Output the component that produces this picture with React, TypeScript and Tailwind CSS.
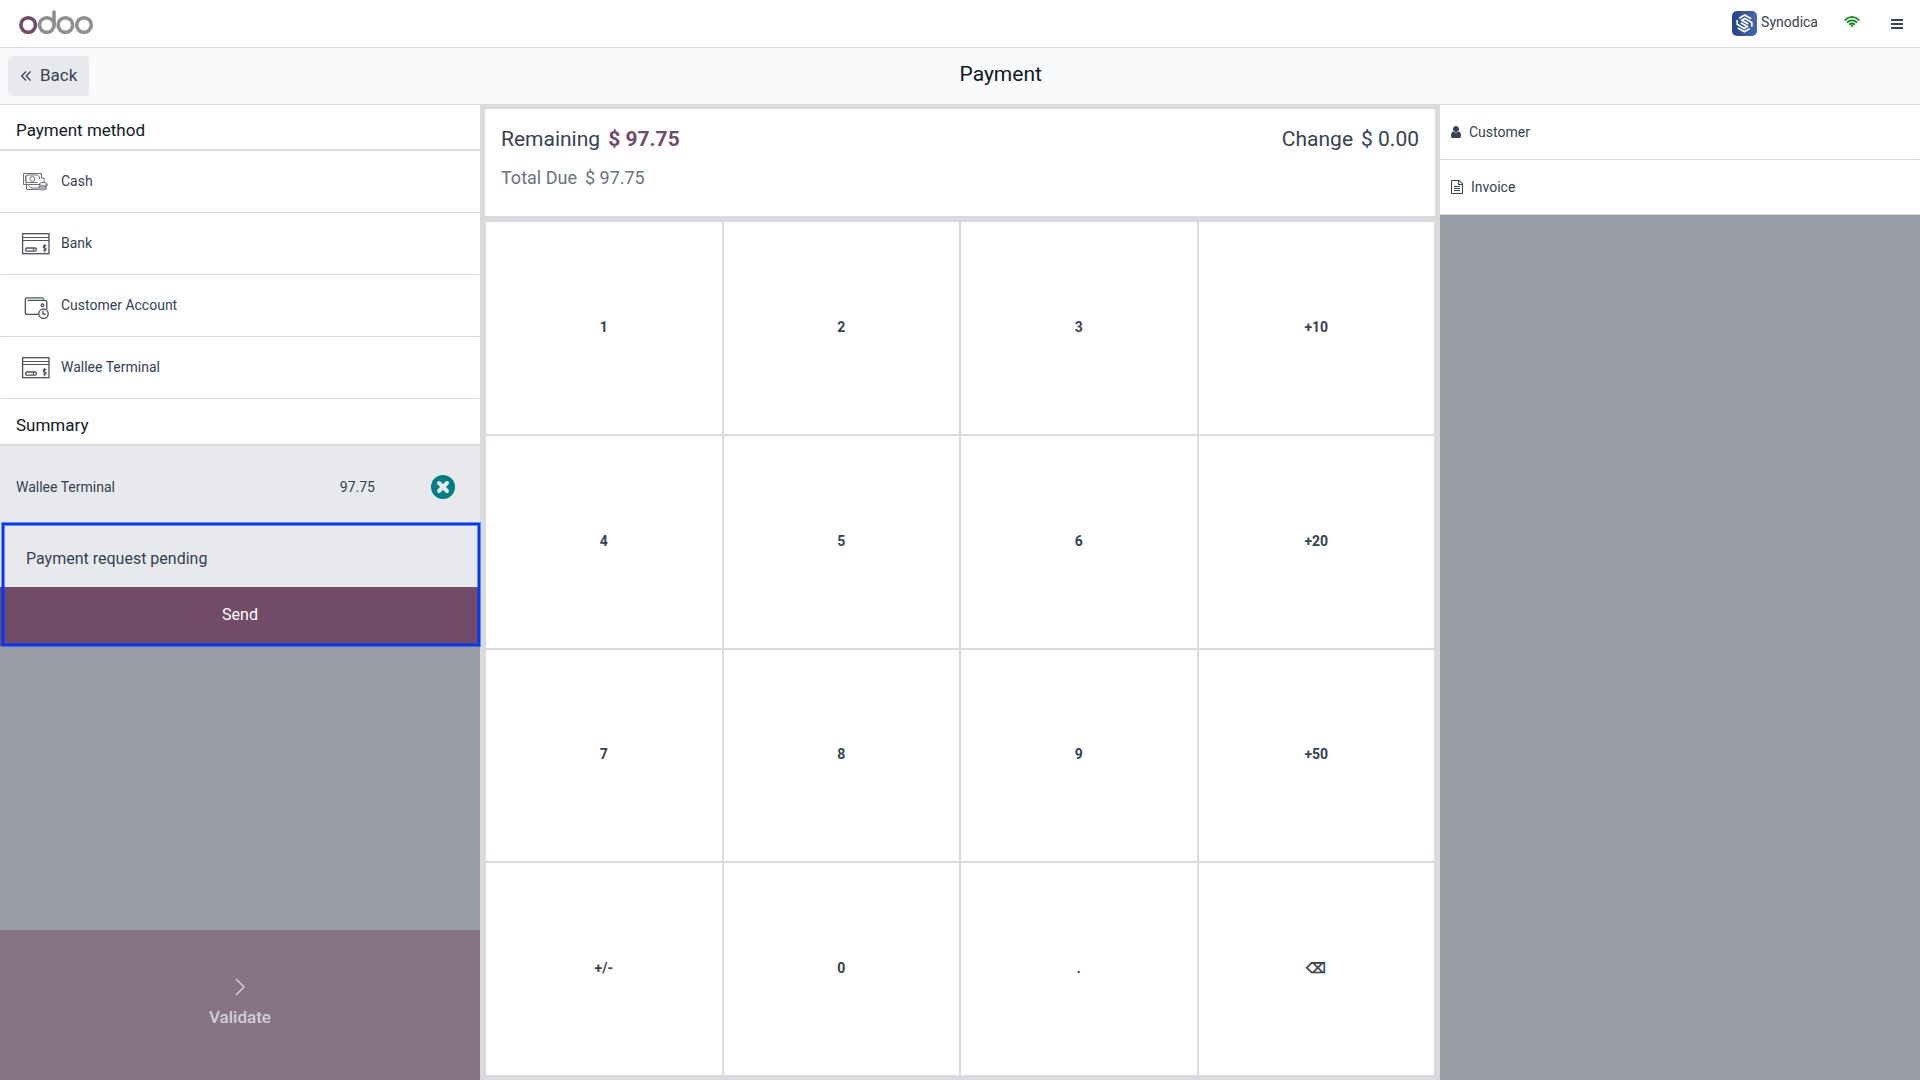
import type { ReactNode } from "react";

const OdooLogo = () => (
  <svg width="76" height="24" viewBox="0 0 76 24" fill="none" strokeWidth="3.6" aria-label="odoo">
    <g stroke="#8f8f8f">
      <circle cx="27.8" cy="15" r="7.3" />
      <circle cx="46.4" cy="15" r="7.3" />
      <circle cx="65" cy="15" r="7.3" />
      <path d="M35 15V2" strokeLinecap="round" />
    </g>
    <circle cx="9.2" cy="15" r="7.3" stroke="#714b67" />
  </svg>
);

const SynodicaLogo = () => (
  <svg width="25" height="25" viewBox="0 0 25 25" fill="none">
    <defs>
      <linearGradient id="synodica" x1="0" y1="0" x2="1" y2="0">
        <stop offset="0" stopColor="#27408b" />
        <stop offset="1" stopColor="#4468ae" />
      </linearGradient>
    </defs>
    <rect width="25" height="25" rx="5" fill="url(#synodica)" />
    <g stroke="#fff" strokeWidth="1.7">
      <path d="M7.2 7.2L12.6 4L19.2 7.8" />
      <path d="M17.8 17.6L12.4 20.8L5.8 17" />
      <path d="M19.8 15.8V11.6L12.8 7.4L9.8 9.2L16.2 13" />
      <path d="M5.2 9V13.2L12.2 17.4L15.2 15.6L8.8 11.8" />
    </g>
  </svg>
);

const WifiIcon = () => (
  <svg width="16" height="12" viewBox="0 0 16 12" fill="none" stroke="#008818" strokeWidth="1.7">
    <path d="M.7 4.3Q8-2.5 15.3 4.3" />
    <path d="M3 6.5Q8 2.1 13 6.5" />
    <path d="M5.2 8.7Q8 6.3 10.8 8.7" />
    <path d="M6.4 9.6Q8 8.3 9.6 9.6L8 11.4z" fill="#008818" stroke="none" />
  </svg>
);

const UserIcon = () => (
  <svg width="10" height="14" viewBox="0 0 1280 1792" fill="currentColor">
    <path d="M1280 1399q0 109-62.5 187t-150.5 78h-854q-88 0-150.5-78t-62.5-187q0-85 8.5-160.5t31.5-152 58.5-131 94-89 134.5-34.5q131 128 313 128t313-128q76 0 134.5 34.5t94 89 58.5 131 31.5 152 8.5 160.5zm-256-887q0 159-112.5 271.5t-271.5 112.5-271.5-112.5-112.5-271.5 112.5-271.5 271.5-112.5 271.5 112.5 112.5 271.5z" />
  </svg>
);

const InvoiceIcon = () => (
  <svg width="12" height="14" viewBox="0 0 1536 1792" fill="currentColor">
    <path d="M1468 380q28 28 48 76t20 88v1152q0 40-28 68t-68 28h-1344q-40 0-68-28t-28-68v-1600q0-40 28-68t68-28h896q40 0 88 20t76 48zm-444-244v376h376q-10-29-22-41l-313-313q-12-12-41-22zm384 1528v-1024h-416q-40 0-68-28t-28-68v-416h-768v1536h1280zm-1024-864q0-14 9-23t23-9h704q14 0 23 9t9 23v64q0 14-9 23t-23 9h-704q-14 0-23-9t-9-23v-64zm736 224q14 0 23 9t9 23v64q0 14-9 23t-23 9h-704q-14 0-23-9t-9-23v-64q0-14 9-23t23-9h704zm0 256q14 0 23 9t9 23v64q0 14-9 23t-23 9h-704q-14 0-23-9t-9-23v-64q0-14 9-23t23-9h704z" />
  </svg>
);

const CashIcon = () => (
  <svg width="30" height="30" viewBox="0 0 30 30" fill="none" stroke="#5b616c" strokeWidth="0.9">
    <path d="M18 17.5H2.5V6.5H20.5V11" />
    <path d="M5 17.5V8.5H6M4.5 13.5V9.5L6.5 8H16.5L18.5 10V12M4.5 13.5L6.5 15.5H16.5" />
    <circle cx="11.3" cy="12" r="2.4" />
    <path d="M5.5 18V22.5H17.5M7.5 18.5L10 21H17M20.5 11H23V15.5" />
    <ellipse cx="22.3" cy="17" rx="3.8" ry="1.5" />
    <path d="M18.5 17V19Q22 21.5 26.1 19V17M18.5 19L17.8 20.5V22Q21.5 24.5 25.3 22V20.5M17.8 20.5Q21.5 22.5 25.3 20.5" />
  </svg>
);

const CardIcon = () => (
  <svg width="30" height="30" viewBox="0 0 30 30" fill="none" stroke="#4b515d">
    <rect x="1.6" y="4.7" width="26.4" height="20" strokeWidth="1.3" />
    <path d="M2 8.5H28M2 11.5H28" strokeWidth="1.2" />
    <rect x="4.5" y="19" width="11" height="3.2" rx="1.6" strokeWidth="1.3" />
    <path d="M12.5 19V22.2" />
    <path d="M25.3 17Q23.7 15.9 22.5 16.9Q21.7 18.4 23.5 19Q25.9 19.5 25 21.1Q23.5 22 22 20.9M23.7 15V23.2" strokeWidth="1.1" />
  </svg>
);

const WalletIcon = () => (
  <svg width="30" height="30" viewBox="0 0 30 30" fill="none" stroke="#4b515d" strokeWidth="1.3">
    <path d="M17.5 23.3H5.8Q4.3 23.3 4.3 21.8V8.5Q4.3 6.8 6 6.8H21Q22.5 6.8 22.7 8.8" />
    <path d="M6.5 9.3H24Q25.8 9.3 25.8 11V18.5" />
    <circle cx="21.5" cy="14.2" r="1.3" />
    <circle cx="22.5" cy="22.7" r="4.7" fill="#fff" />
    <path d="M22 19.7V23.2H25" />
  </svg>
);

const paymentMethods: { name: string; icon: ReactNode }[] = [
  { name: "Cash", icon: <CashIcon /> },
  { name: "Bank", icon: <CardIcon /> },
  { name: "Customer Account", icon: <WalletIcon /> },
  { name: "Wallee Terminal", icon: <CardIcon /> },
];

const keys = ["1", "2", "3", "+10", "4", "5", "6", "+20", "7", "8", "9", "+50", "+/-", "0", ".", "⌫"];

function SectionTitle({ title }: { title: string }) {
  return (
    <h2 className="h-[46px] px-4 pt-1 border-b-2 border-[#d8dadd] bg-white text-[17px] leading-[42px] text-gray-900">
      {title}
    </h2>
  );
}

function LeftPanel() {
  return (
    <aside className="flex flex-col bg-[#9a9ca5]">
      <section className="bg-white">
        <SectionTitle title="Payment method" />
        {paymentMethods.map((method) => (
          <button
            key={method.name}
            className="flex items-center w-full h-[62px] gap-2.5 px-5 border border-transparent border-b-[#d8dadd] text-sm"
          >
            {method.icon}
            <span className="pb-0.5">{method.name}</span>
          </button>
        ))}
      </section>
      <section className="pt-px bg-white">
        <SectionTitle title="Summary" />
        <div className="flex items-center h-[78px] pt-1 pl-4 pr-[25px] bg-[#e7e9ed] text-sm">
          <span className="flex-1">Wallee Terminal</span>
          <span className="mr-14">97.75</span>
          <button
            aria-label="Remove payment"
            className="flex items-center justify-center w-6 h-6 rounded-full bg-[#017e84]"
          >
            <svg width="14" height="14" viewBox="0 0 14 14" stroke="#e7e9ed" strokeWidth="4" strokeLinecap="round">
              <path d="M3 3L11 11M11 3L3 11" />
            </svg>
          </button>
        </div>
        <div className="relative">
          <p className="h-[63px] px-[26px] pt-2 bg-[#e7e9ed] text-[16px] leading-[54px]">
            Payment request pending
          </p>
          <button className="block w-full h-[59px] pb-1 bg-[#714b67] text-[16px] text-white">Send</button>
          {/* focus frame around the pending request */}
          <div className="absolute pointer-events-none -top-px bottom-0 left-0.5 right-0 border-2 border-[#0036ff] shadow-[0_0_0_1px_#0036ff80,inset_0_0_0_1px_#0036ff80]" />
        </div>
      </section>
      <button className="flex flex-col items-center justify-center h-[150px] gap-2 pb-1 mt-auto bg-[#867485] text-[17px] leading-6 font-medium text-[#d0cfd5]">
        <svg width="12" height="20" viewBox="0 0 12 20" fill="none" stroke="currentColor" strokeWidth="1.5">
          <path d="M2 2L10 10L2 18" />
        </svg>
        Validate
      </button>
    </aside>
  );
}

function CenterPanel() {
  return (
    <main className="flex flex-col gap-[5px] bg-[#d8dadd] px-[5px] py-1">
      <section className="flex justify-between h-[107px] px-4 pt-4 bg-white">
        <div>
          <p className="flex gap-2 text-[21px] leading-7">
            Remaining <span className="font-bold text-[#714b67]">$ 97.75</span>
          </p>
          <p className="flex gap-2 mt-[11px] text-[18px] leading-7 text-gray-500">
            Total Due <span>$ 97.75</span>
          </p>
        </div>
        <p className="flex gap-2 text-[21px] leading-7">
          Change <span>$ 0.00</span>
        </p>
      </section>
      <div className="grid flex-1 grid-cols-4 grid-rows-4 gap-0.5 p-px">
        {keys.map((key) => (
          <button key={key} className="pb-0.5 bg-white text-sm font-bold">
            {key}
          </button>
        ))}
      </div>
    </main>
  );
}

function RightPanel() {
  return (
    <aside className="bg-[#9a9ca5]">
      <button className="flex items-center w-full h-[55px] gap-2 px-2.5 pb-0.5 border border-transparent border-b-[#d8dadd] bg-white text-sm">
        <UserIcon />
        Customer
      </button>
      <button className="flex items-center w-full h-[55px] gap-2 px-2.5 pb-0.5 border border-transparent border-b-[#d8dadd] bg-white text-sm">
        <InvoiceIcon />
        Invoice
      </button>
    </aside>
  );
}

export default function App() {
  return (
    <div className="flex flex-col min-h-screen font-[Roboto,sans-serif] text-gray-700">
      <header className="flex items-center h-12 pl-[19px] pr-4 border-b border-[#d8dadd] bg-white">
        <div className="pb-1">
          <OdooLogo />
        </div>
        <div className="flex items-center ml-auto">
          <SynodicaLogo />
          <span className="ml-1 mr-[26px] pb-1 text-sm">Synodica</span>
          <div className="mr-[30px] pb-1">
            <WifiIcon />
          </div>
          <button aria-label="Menu">
            <svg width="14" height="12" viewBox="0 0 14 12" fill="currentColor">
              <path d="M1 1h12v2H1zM1 5h12v2H1zM1 9h12v2H1z" />
            </svg>
          </button>
        </div>
      </header>
      <div className="flex items-center h-[57px] px-2 border-b border-[#d8dadd] bg-gray-50">
        <button className="flex items-center h-10 gap-2 px-3 rounded bg-[#e7e9ed] text-[17px]">
          <svg width="12" height="12" viewBox="0 0 12 12" fill="none" stroke="currentColor" strokeWidth="1.3">
            <path d="M6 1.5L1.7 6L6 10.5M10.5 1.5L6.2 6L10.5 10.5" />
          </svg>
          Back
        </button>
        <h1 className="flex-1 pb-0.5 text-[21px] text-center text-gray-900">Payment</h1>
      </div>
      <div className="grid flex-1 grid-cols-[1fr_2fr_1fr]">
        <LeftPanel />
        <CenterPanel />
        <RightPanel />
      </div>
    </div>
  );
}
